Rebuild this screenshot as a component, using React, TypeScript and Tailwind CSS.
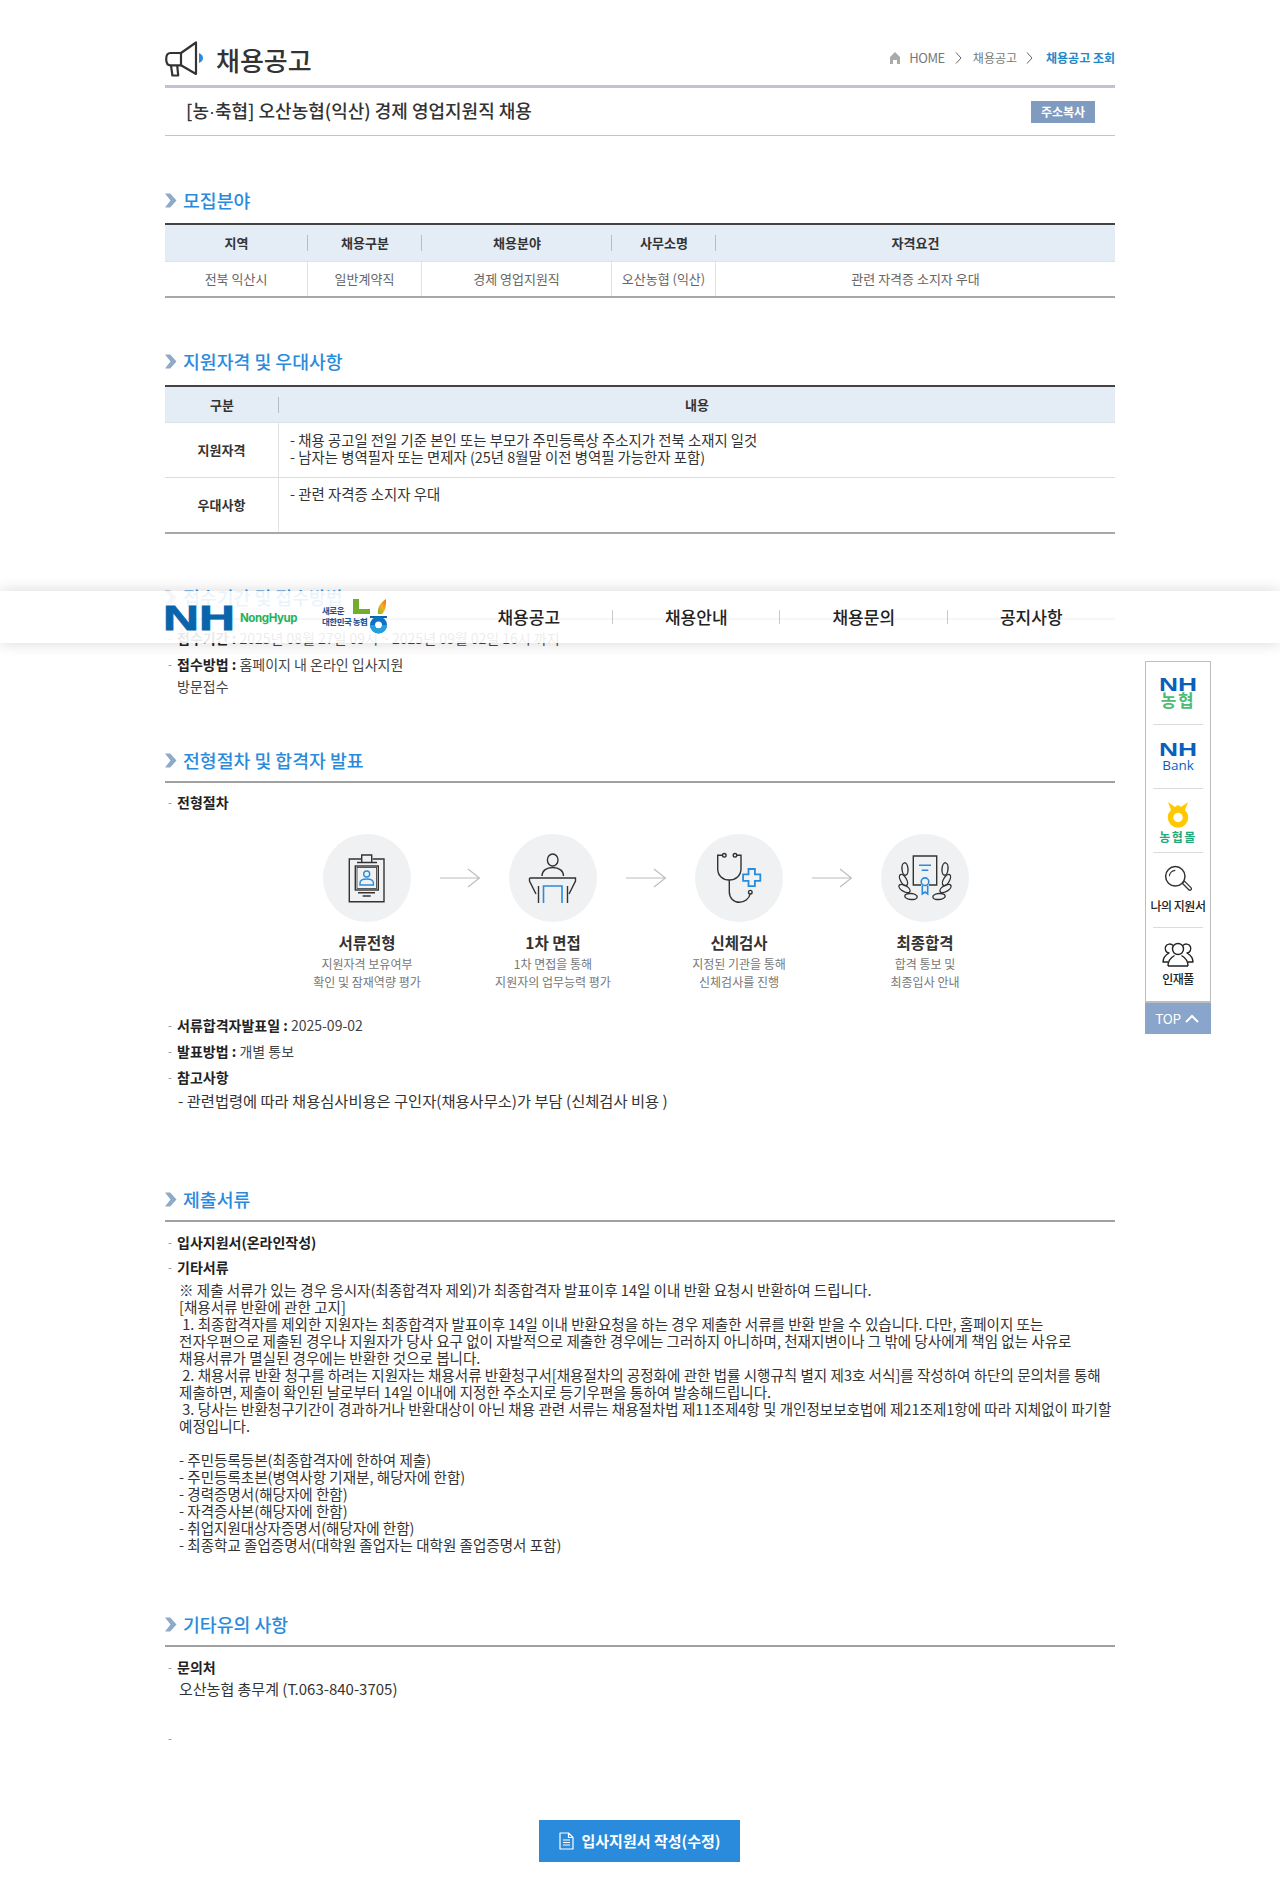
import React from "react";

const NOTO = "font-['Noto_Sans_CJK_KR','Noto_Sans',sans-serif]";

function Heading({ children, rule = true, mt }: { children: React.ReactNode; rule?: boolean; mt: string }) {
  return (
    <div className={mt}>
      <div className="flex items-center h-6">
        <svg width="12" height="15" viewBox="0 0 12 15" className="shrink-0">
          <path d="M0 .5h5.200L11.500 7.500l-6.300 7H0l5.500-7z" fill="#8fa9c9" />
        </svg>
        <h2 className="ml-[6px] text-[18.300px] font-medium leading-6 text-[#2a8bdc]">{children}</h2>
      </div>
      {rule && <div className="mt-[9px] h-[2px] bg-[#a0a0a0]" />}
    </div>
  );
}

function Item({ children, className = "" }: { children: React.ReactNode; className?: string }) {
  return (
    <div className={`flex text-[14px] leading-[22px] text-[#444] ${className}`}>
      <span className="w-3 shrink-0 pl-[3px] text-[11px] text-[#888]">-</span>
      <div>{children}</div>
    </div>
  );
}

const Th = ({ children, line = true }: { children: React.ReactNode; line?: boolean }) => (
  <div className="relative flex items-center justify-center text-[13px] font-bold text-[#333]">
    {children}
    {line && <span className="absolute right-0 top-[10px] h-4 w-px bg-[#b5bcc6]" />}
  </div>
);

const Td = ({ children, line = true }: { children: React.ReactNode; line?: boolean }) => (
  <div className={`flex items-center justify-center text-[13px] text-[#666] ${line ? "border-r border-[#e2e2e2]" : ""}`}>{children}</div>
);

function Megaphone() {
  return (
    <svg width="42" height="37" viewBox="0 0 42 37" fill="none" stroke="#333" strokeWidth="2.200" strokeLinejoin="round">
      <path d="M31 1.500V33L16 24.300H5.500C3 24.300 1.200 22 1.200 18.200S3 12 5.500 12H16z" />
      <path d="M16 12v12.300M6 24.300l1.400 10.200h5.800l-1-10.200" />
      <path d="M34 12c2.600 1 4 3 4 5s-1.400 4-4 5z" fill="#2a8bdc" stroke="none" />
    </svg>
  );
}

function Chev() {
  return (
    <svg width="7" height="12" viewBox="0 0 7 12" fill="none" stroke="#666" strokeWidth="1">
      <path d="M1 .5l5 5.500-5 5.500" />
    </svg>
  );
}

function Logo() {
  return (
    <div className="flex items-start">
      <svg width="70" height="26" viewBox="0 0 70 26" className="mt-[14px]">
        <text x="-2" y="25" textLength="72" lengthAdjust="spacingAndGlyphs" fontSize="35" fontWeight="700" fontFamily="Liberation Sans" fill="#0a64ac" stroke="#0a64ac" strokeWidth=".8">NH</text>
      </svg>
      <span className="ml-[5px] mt-[17px] w-[60px] font-['Inter',sans-serif] text-[11.500px] font-bold leading-[20px] tracking-[-0.4px] text-[#1fb45c]">NongHyup</span>
      <div className="ml-[22px] mt-[14px] w-[34px] text-[8.500px] font-bold leading-[11px] tracking-[-0.5px] text-[#1b4f8f] whitespace-nowrap">
        <div>새로운</div>
        <div>대한민국 농협</div>
      </div>
      <svg width="38" height="36" viewBox="0 0 38 36" className="ml-[-4px] mt-[7px]">
        <defs>
          <linearGradient id="fl" x1="0" y1="1" x2="1" y2="0">
            <stop offset="0" stopColor="#7eb62c" />
            <stop offset=".5" stopColor="#f5b01f" />
            <stop offset="1" stopColor="#ee6c1c" />
          </linearGradient>
        </defs>
        <path d="M1 1h6v10h11v5H1z" fill="#72ad2d" />
        <path d="M26 16c-1-6 2-11 8-15 0 6 0 11-4 15z" fill="url(#fl)" />
        <path d="M18 18h17v2H18z" fill="#0a64ac" />
        <circle cx="26.500" cy="27" r="6" fill="none" stroke="#0a74c4" strokeWidth="5" />
        <path d="M20.500 27a6 6 0 0 0 12 0" fill="none" stroke="#26a0dd" strokeWidth="5" />
      </svg>
    </div>
  );
}

function Nav() {
  const items = ["채용공고", "채용안내", "채용문의", "공지사항"];
  return (
    <div className="absolute left-0 right-0 top-[591px] z-10 h-[52px] bg-white/90 shadow-[0_0_14px_rgba(0,0,0,0.16)]">
      <div className="mx-auto flex h-full w-[950px] items-start">
        <div className="w-[280px] shrink-0 h-full"><Logo /></div>
        <div className="grid flex-1 grid-cols-4 pt-[19px]">
          {items.map((t, i) => (
            <div key={t} className="relative flex h-[14px] items-center justify-center text-[17px] font-medium text-[#222]">
              {t}
              {i < 3 && <span className="absolute right-0 top-0 h-[14px] w-px bg-[#c8c8c8]" />}
            </div>
          ))}
        </div>
      </div>
    </div>
  );
}

function Side() {
  return (
    <div className="absolute left-[1145px] top-[661px] z-20 w-[66px] bg-white text-center">
      <div className="border border-b-2 border-[#bdbdbd]">
        <div className="mx-[7px] flex h-[63px] flex-col items-center border-b border-[#dcdcdc] pt-4">
          <svg width="36" height="13" viewBox="0 0 36 13">
            <text x="-1" y="13" textLength="38" lengthAdjust="spacingAndGlyphs" fontSize="18" fontWeight="700" fontFamily="Liberation Sans" fill="#0a5fbb">NH</text>
          </svg>
          <span className="mt-[-1px] text-[17px] font-bold leading-[19px] tracking-[1.500px] text-[#4dbb74]">농협</span>
        </div>
        <div className="mx-[7px] flex h-[64px] flex-col items-center border-b border-[#dcdcdc] pt-[18px]">
          <svg width="36" height="13" viewBox="0 0 36 13">
            <text x="-1" y="13" textLength="38" lengthAdjust="spacingAndGlyphs" fontSize="18" fontWeight="700" fontFamily="Liberation Sans" fill="#0a5fbb">NH</text>
          </svg>
          <span className="font-['Open_Sans',sans-serif] text-[13.500px] leading-[18px] text-[#0a5fbb]">Bank</span>
        </div>
        <div className="mx-[7px] flex h-[64px] flex-col items-center border-b border-[#dcdcdc] pt-[13px]">
          <svg width="24" height="26" viewBox="0 0 24 26">
            <path d="M2 0l7 5 3-2 3 2 7-5-3 8H5z" fill="#ffc800" />
            <circle cx="12" cy="15.500" r="7.500" fill="none" stroke="#ffc800" strokeWidth="5.500" />
          </svg>
          <span className="mt-[1px] text-[12px] font-bold leading-[15px] tracking-[1.500px] text-[#1fa97c]">농협몰</span>
        </div>
        <div className="mx-[7px] flex h-[75px] flex-col items-center border-b border-[#dcdcdc] pt-[12px]">
          <svg width="28" height="28" viewBox="0 0 26 26" fill="none" stroke="#333">
            <circle cx="10.500" cy="10.500" r="9" strokeWidth="1.400" />
            <path d="M5 10.500a5.500 5.500 0 0 1 5.500-5.500" strokeWidth="1" />
            <path d="M17 17l2-2 6 6a1.400 1.400 0 0 1-2 2z" strokeWidth="1.200" strokeLinejoin="round" />
          </svg>
          <span className="mt-[4px] whitespace-nowrap text-[12px] font-medium leading-[18px] tracking-[-0.5px] text-[#222]">나의 지원서</span>
        </div>
        <div className="flex h-[73px] flex-col items-center pt-[13px]">
          <svg width="32" height="26" viewBox="0 0 32 26" fill="none" stroke="#222" strokeWidth="1.400" strokeLinejoin="round">
            <circle cx="16" cy="8" r="5.500" />
            <path d="M6 25c0-5 2-8 6.500-10.500M26 25c0-5-2-8-6.500-10.500M6 25h20" />
            <path d="M11 4.500a4.500 4.500 0 1 0-4 7.500C3.500 14 1 17 1 21h5M21 4.500a4.500 4.500 0 1 1 4 7.500c3.500 2 6 5 6 9h-5" />
          </svg>
          <span className="mt-[3px] text-[12px] font-medium leading-[18px] tracking-[-0.5px] text-[#222]">인재풀</span>
        </div>
      </div>
      <div className="flex h-[31px] items-center justify-center gap-[4px] bg-[#8aa5cb] pr-[2px] text-[13.500px] tracking-[-0.3px] text-white">
        TOP
        <svg width="14" height="9" viewBox="0 0 14 9" fill="none" stroke="#fff" strokeWidth="2"><path d="M1 8l6-6 6 6" /></svg>
      </div>
    </div>
  );
}

const Arrow = () => (
  <svg width="40" height="20" viewBox="0 0 40 20" fill="none" stroke="#bcbcbc" strokeWidth="1.200">
    <path d="M0 10h39.500M28 1l11.500 9L28 19" />
  </svg>
);

const Dk = "#333";
const Bl = "#2a8bdc";

const Icon1 = () => (
  <svg width="88" height="88" viewBox="0 0 88 88" fill="none" stroke={Dk} strokeWidth="1.400">
    <path d="M38 25H26.300v42.700H61V25H49.500" />
    <path d="M34 28.500h20M38.700 28V21h10v7" />
    <rect x="32.300" y="32" width="23" height="24" />
    <rect x="34" y="33.500" width="19.600" height="21" strokeWidth=".8" />
    <path d="M35 58.700h17M39.700 62h8" />
    <g stroke={Bl}>
      <circle cx="43.700" cy="40" r="3" />
      <path d="M37 51v-2c0-2.500 3-4 6.700-4s6.700 1.500 6.700 4v2z" />
    </g>
  </svg>
);

const Icon2 = () => (
  <svg width="88" height="88" viewBox="0 0 88 88" fill="none" stroke={Dk} strokeWidth="1.400">
    <ellipse cx="43.700" cy="26" rx="5.300" ry="6" />
    <path d="M33 42c0-5 4-8.500 10.700-8.500S54.500 37 54.500 42" />
    <path d="M20.500 44h46V47L60 60M20.500 44V47L27 60" />
    <path d="M29.500 52v17M58.500 52v17" />
    <path d="M34.500 69V52h18.500v17" stroke={Bl} strokeWidth="1.600" />
  </svg>
);

const Icon3 = () => (
  <svg width="88" height="88" viewBox="0 0 88 88" fill="none" stroke={Dk} strokeWidth="1.400">
    <circle cx="29.300" cy="21.300" r="1.800" />
    <circle cx="40" cy="21.300" r="1.800" />
    <path d="M27 21.300h-4.300V35c0 6.500 5 11 11.500 11S46 41.500 46 35V21.300h-4" />
    <path d="M34.300 46v12c0 6 4.500 10.300 10.200 10.300 5.200 0 10-4 10.500-8.300" />
    <circle cx="55.300" cy="58.200" r="1.800" />
    <path d="M53.500 35h6.400v5.400h5.400v6.400h-5.400v5.400h-6.400v-5.400h-5.400v-6.400h5.400z" stroke={Bl} strokeWidth="1.800" />
  </svg>
);

const Leaf = ({ x, y, r }: { x: number; y: number; r: number }) => (
  <ellipse cx={x} cy={y} rx="3" ry="6.200" transform={`rotate(${r} ${x} ${y})`} />
);

const Icon4 = () => (
  <svg width="88" height="88" viewBox="0 0 88 88" fill="none" stroke={Dk} strokeWidth="1.400">
    <path d="M40 51h-7.700V22h23.400v29H48" />
    <path d="M38 31.300h12M40.700 36.300h6.600" stroke={Bl} strokeWidth="1.600" />
    <circle cx="44" cy="47.700" r="3.800" stroke={Bl} strokeWidth="1.600" />
    <path d="M41.300 51.500V60l2.700-2 2.700 2v-8.500" stroke={Bl} strokeWidth="1.600" />
    <Leaf x={24} y={35} r={-5} />
    <Leaf x={22.500} y={46} r={-30} />
    <Leaf x={23.500} y={54.500} r={-60} />
    <Leaf x={30} y={62.500} r={-85} />
    <Leaf x={64} y={35} r={5} />
    <Leaf x={65.500} y={46} r={30} />
    <Leaf x={64.500} y={54.500} r={60} />
    <Leaf x={58} y={62.500} r={85} />
  </svg>
);

function Step({ icon, title, lines }: { icon: React.ReactNode; title: string; lines: string[] }) {
  return (
    <div className="flex w-[130px] flex-col items-center">
      <div className="h-[88px] w-[88px] rounded-full bg-[#f0f1f2]">{icon}</div>
      <div className="mb-[2px] mt-[9px] text-[15.500px] font-bold leading-[22px] text-[#333]">{title}</div>
      {lines.map((l) => (
        <div key={l} className="whitespace-nowrap text-[12px] leading-[18px] text-[#777]">{l}</div>
      ))}
    </div>
  );
}

export default function App() {
  return (
    <div className={`relative min-h-[1902px] overflow-hidden bg-white ${NOTO}`}>
      <Nav />
      <Side />
      <main className="mx-auto w-[950px]">
        <header className="relative flex h-[88px] items-start justify-between border-b-[3px] border-[#bfc3d3]">
          <div className="flex items-center pt-[41px]">
            <Megaphone />
            <h1 className="ml-[9px] text-[26px] font-medium leading-[37px] text-[#333]">채용공고</h1>
          </div>
          <nav className="flex items-center pt-[48px] text-[12px] leading-[20px] text-[#777]">
            <svg width="12" height="12" viewBox="0 0 12 12" className="mr-[8px]"><path d="M6 0l5 5v7H8V8H4v4H1V5z" fill="#aaa" /></svg>
            <span className="text-[13px] tracking-[-0.4px]">HOME</span>
            <span className="ml-[10px] mr-[11px]"><Chev /></span>
            <span>채용공고</span>
            <span className="ml-[9px] mr-[13px]"><Chev /></span>
            <span className="font-bold text-[#1e88c8]">채용공고 조회</span>
          </nav>
        </header>

        <div className="flex h-[48px] items-center justify-between border-b border-[#c4c4c4] pl-[21px] pr-5">
          <div className="text-[18px] font-medium text-[#333]">[농<span className="font-['Liberation_Sans',sans-serif]">·</span>축협] 오산농협(익산) 경제 영업지원직 채용</div>
          <div className="flex h-[22px] w-16 items-center justify-center bg-[#7f9bc0] text-[12px] font-bold text-white">주소복사</div>
        </div>

        <Heading mt="mt-[52px]" rule={false}>모집분야</Heading>
        <div className="mt-[11px] border-t-2 border-[#444]">
          <div className="grid h-[37px] grid-cols-[143px_114px_190px_104px_399px] border-b border-[#dde2e9] bg-[#e4ecf6]">
            <Th>지역</Th><Th>채용구분</Th><Th>채용분야</Th><Th>사무소명</Th><Th line={false}>자격요건</Th>
          </div>
          <div className="grid h-[36px] grid-cols-[143px_114px_190px_104px_399px] border-b-2 border-[#a8a8a8]">
            <Td>전북 익산시</Td><Td>일반계약직</Td><Td>경제 영업지원직</Td><Td>오산농협 (익산)</Td><Td line={false}>관련 자격증 소지자 우대</Td>
          </div>
        </div>

        <Heading mt="mt-[51px]" rule={false}>지원자격 및 우대사항</Heading>
        <div className="mt-[12px] border-t-2 border-[#444]">
          <div className="grid h-[36px] grid-cols-[114px_836px] border-b border-[#dde2e9] bg-[#e4ecf6]">
            <Th>구분</Th><Th line={false}>내용</Th>
          </div>
          <div className="grid h-[55px] grid-cols-[114px_836px] border-b border-[#dcdcdc]">
            <div className="flex items-center justify-center border-r border-[#e2e2e2] text-[13px] font-bold text-[#333]">지원자격</div>
            <div className="pl-[11px] pt-[8px] text-[14.400px] leading-[17px] text-[#333]">
              <div>- 채용 공고일 전일 기준 본인 또는 부모가 주민등록상 주소지가 전북 소재지 일것</div>
              <div>- 남자는 병역필자 또는 면제자 (25년 8월말 이전 병역필 가능한자 포함)</div>
            </div>
          </div>
          <div className="grid h-[56px] grid-cols-[114px_836px] border-b-2 border-[#a8a8a8]">
            <div className="flex items-center justify-center border-r border-[#e2e2e2] text-[13px] font-bold text-[#333]">우대사항</div>
            <div className="pl-[11px] pt-[7px] text-[14.400px] leading-[17px] text-[#333]">- 관련 자격증 소지자 우대</div>
          </div>
        </div>

        <Heading mt="mt-[51px]">접수기간 및 접수방법</Heading>
        <Item className="mt-[7px]"><b className="font-bold text-[#222]">접수기간 :</b> 2025년 08월 27일 09시 ~ 2025년 09월 02일 16시 까지</Item>
        <Item className="mt-[4px]"><b className="font-bold text-[#222]">접수방법 :</b> 홈페이지 내 온라인 입사지원<br />방문접수</Item>

        <Heading mt="mt-[51px]">전형절차 및 합격자 발표</Heading>
        <Item className="mt-[8px]"><b className="font-bold text-[#222]">전형절차</b></Item>
        <div className="mt-[21px] flex items-start pl-[137px]">
          <Step icon={<Icon1 />} title="서류전형" lines={["지원자격 보유여부", "확인 및 잠재역량 평가"]} />
          <div className="flex h-[88px] w-14 items-center justify-center"><Arrow /></div>
          <Step icon={<Icon2 />} title="1차 면접" lines={["1차 면접을 통해", "지원자의 업무능력 평가"]} />
          <div className="flex h-[88px] w-14 items-center justify-center"><Arrow /></div>
          <Step icon={<Icon3 />} title="신체검사" lines={["지정된 기관을 통해", "신체검사를 진행"]} />
          <div className="flex h-[88px] w-14 items-center justify-center"><Arrow /></div>
          <Step icon={<Icon4 />} title="최종합격" lines={["합격 통보 및", "최종입사 안내"]} />
        </div>
        <Item className="mt-[23px]"><b className="font-bold text-[#222]">서류합격자발표일 :</b> 2025-09-02</Item>
        <Item className="mt-[4px]"><b className="font-bold text-[#222]">발표방법 :</b> 개별 통보</Item>
        <Item className="mt-[4px]"><b className="font-bold text-[#222]">참고사항</b></Item>
        <div className="ml-[13px] mt-[1px] whitespace-nowrap text-[15.300px] leading-[22px] text-[#333]">- 관련법령에 따라 채용심사비용은 구인자(채용사무소)가 부담 (신체검사 비용 )</div>

        <Heading mt="mt-[76px]">제출서류</Heading>
        <Item className="mt-[9px]"><b className="font-bold text-[#222]">입사지원서(온라인작성)</b></Item>
        <Item className="mt-[3px]"><b className="font-bold text-[#222]">기타서류</b></Item>
        <div className="ml-[14px] mt-[3px] whitespace-nowrap text-[14.550px] leading-[17px] text-[#333]">
          ※ 제출 서류가 있는 경우 응시자(최종합격자 제외)가 최종합격자 발표이후 14일 이내 반환 요청시 반환하여 드립니다.<br />
          [채용서류 반환에 관한 고지]<br />
          &nbsp;1. 최종합격자를 제외한 지원자는 최종합격자 발표이후 14일 이내 반환요청을 하는 경우 제출한 서류를 반환 받을 수 있습니다. 다만, 홈페이지 또는<br />
          전자우편으로 제출된 경우나 지원자가 당사 요구 없이 자발적으로 제출한 경우에는 그러하지 아니하며, 천재지변이나 그 밖에 당사에게 책임 없는 사유로<br />
          채용서류가 멸실된 경우에는 반환한 것으로 봅니다.<br />
          &nbsp;2. 채용서류 반환 청구를 하려는 지원자는 채용서류 반환청구서[채용절차의 공정화에 관한 법률 시행규칙 별지 제3호 서식]를 작성하여 하단의 문의처를 통해<br />
          제출하면, 제출이 확인된 날로부터 14일 이내에 지정한 주소지로 등기우편을 통하여 발송해드립니다.<br />
          &nbsp;3. 당사는 반환청구기간이 경과하거나 반환대상이 아닌 채용 관련 서류는 채용절차법 제11조제4항 및 개인정보보호법에 제21조제1항에 따라 지체없이 파기할<br />
          예정입니다.<br />
          <br />
          - 주민등록등본(최종합격자에 한하여 제출)<br />
          - 주민등록초본(병역사항 기재분, 해당자에 한함)<br />
          - 경력증명서(해당자에 한함)<br />
          - 자격증사본(해당자에 한함)<br />
          - 취업지원대상자증명서(해당자에 한함)<br />
          - 최종학교 졸업증명서(대학원 졸업자는 대학원 졸업증명서 포함)
        </div>

        <Heading mt="mt-[59px]">기타유의 사항</Heading>
        <Item className="mt-[9px]"><b className="font-bold text-[#222]">문의처</b></Item>
        <div className="ml-[14px] text-[15px] leading-[22px] text-[#333]">오산농협 총무계 (T.063-840-3705)</div>
        <Item className="mt-[27px]"><span>&nbsp;</span></Item>

        <div className="mt-[71px] flex justify-center pb-10 pr-[1px]">
          <div className="flex h-[42px] w-[201px] items-center justify-center gap-2 bg-[#2a8bdc] text-[15px] font-bold text-white">
            <svg width="15" height="18" viewBox="0 0 15 18" fill="none" stroke="#fff" strokeWidth="1.200" strokeLinejoin="round">
              <path d="M1 1h8.500L14 5.500V17H1zM9.500 1v4.500H14M4 8h7M4 10.500h7M4 13h7" />
            </svg>
            입사지원서 작성(수정)
          </div>
        </div>
      </main>
    </div>
  );
}
